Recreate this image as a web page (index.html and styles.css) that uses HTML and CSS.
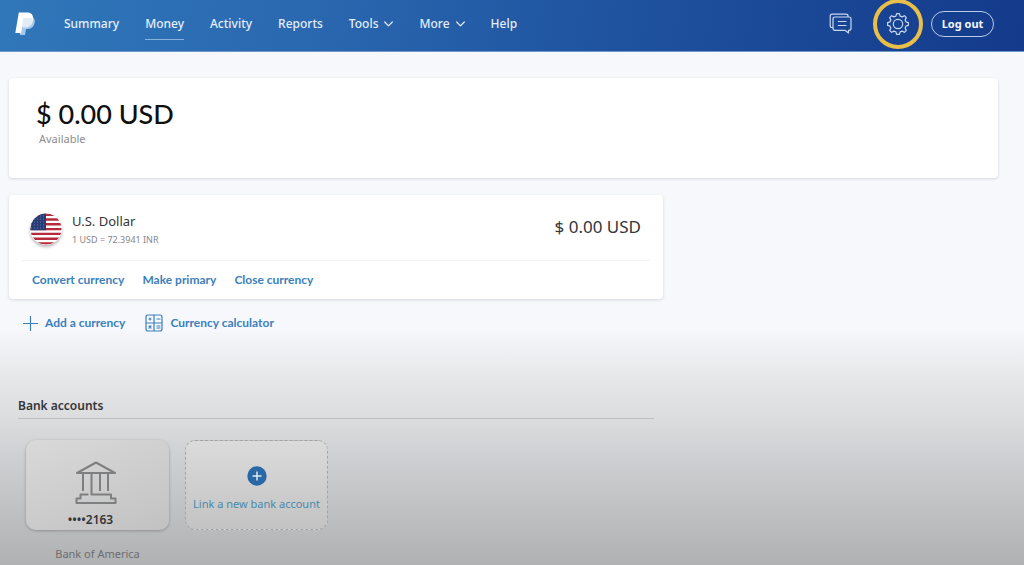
FILE: index.html
```html
<!DOCTYPE html>
<html lang="en">
<head>
<meta charset="utf-8">
<meta name="viewport" content="width=device-width, initial-scale=1">
<title>Money</title>
<link rel="stylesheet" href="styles.css">
</head>
<body class="page">
<header class="topbar">
  <a class="logo" href="#" aria-label="PayPal home">
    <svg width="20" height="24" viewBox="0 0 20 24">
      <path fill="#a9c9e8" d="M17.5 5C20 6.500 20.200 9 19.300 12C18.300 15.500 15.700 17 12.500 17H11L10 23H5L6 17Z"/>
      <path fill="#dbe8f5" d="M6 7H18C18 12.500 15 15.600 10 15.600H7L5.200 23H5Z"/>
      <path fill="#fff" d="M3.800.5H12C16.500.5 18.500 3 17.900 7C17.200 11.700 14.200 14 9.500 14H7.200L6 21H.3Z"/>
      <path fill="#e3edf8" d="M8.300 6H17.900C17.300 11.500 14.200 14 9.500 14H7.100Z"/>
    </svg>
  </a>
  <nav class="nav">
    <a class="nav-link" href="#">Summary</a>
    <a class="nav-link nav-current" href="#" aria-current="page">Money</a>
    <a class="nav-link" href="#">Activity</a>
    <a class="nav-link" href="#">Reports</a>
    <button class="nav-link" type="button">Tools <svg width="9" height="6" viewBox="0 0 9 6"><path class="line" d="M.7 1L4.500 4.800L8.300 1"/></svg></button>
    <button class="nav-link" type="button">More <svg width="9" height="6" viewBox="0 0 9 6"><path class="line" d="M.7 1L4.500 4.800L8.300 1"/></svg></button>
    <a class="nav-link" href="#">Help</a>
  </nav>
  <div class="tools">
    <button class="icon-button" type="button" aria-label="Messages">
      <svg width="24" height="22" viewBox="0 0 24 22"><path class="line" d="M4 14.500H3Q1.200 14.500 1.200 12.700V3Q1.200 1.200 3 1.200H17Q19 1.200 19 3V3.800M6 4H20Q22 4 22 6V15.300Q22 17.300 20 17.300H19.500V20L16 17.300H6Q4 17.300 4 15.300V6Q4 4 6 4ZM9.300 8.500H17M9.300 12.500H17"/></svg>
    </button>
    <button class="icon-button ringed" type="button" aria-label="Settings">
      <svg width="24" height="24" viewBox="-12 -12 24 24"><path class="line" d="M-1.400-10.400H1.400L2.100-7.900Q3.200-7.600 4.100-7.100L6.360-8.340L8.340-6.360L7.100-4.100Q7.600-3.200 7.900-2.100L10.400-1.400V1.400L7.900 2.100Q7.600 3.200 7.100 4.100L8.340 6.360L6.360 8.340L4.100 7.100Q3.200 7.600 2.100 7.900L1.400 10.400H-1.400L-2.100 7.900Q-3.200 7.600-4.100 7.100L-6.360 8.340L-8.340 6.360L-7.100 4.100Q-7.600 3.200-7.900 2.100L-10.400 1.400V-1.400L-7.900-2.100Q-7.600-3.200-7.100-4.100L-8.340-6.360L-6.360-8.340L-4.100-7.100Q-3.200-7.600-2.100-7.900Z"/><circle class="line" r="4.700"/></svg>
    </button>
    <button class="logout" type="button">Log out</button>
  </div>
</header>
<main class="content">
  <section class="card balance">
    <h1 class="balance-amount">$ 0.00 USD</h1>
    <p class="balance-label">Available</p>
  </section>
  <section class="card currency">
    <div class="currency-row">
      <svg class="flag" width="32" height="32" viewBox="0 0 32 32" aria-hidden="true">
        <defs><clipPath id="disc"><circle cx="16" cy="16" r="15.500"/></clipPath></defs>
        <g clip-path="url(#disc)">
          <path fill="#fff" d="M0 0H32V32H0Z"/>
          <path stroke="#b52b3c" stroke-width="2.400" d="M0 1.700H32M0 6.500H32M0 11.300H32M0 16.100H32M0 20.900H32M0 25.700H32M0 30.500H32"/>
          <path fill="#293c75" d="M0 0H16V17.300H0Z"/>
          <path stroke="#6577ab" stroke-width="1" stroke-dasharray="1 2" d="M1 3H16M1 6H16M1 9H16M1 12H16M1 15H16"/>
        </g>
      </svg>
      <div class="currency-info">
        <h2 class="currency-name">U.S. Dollar</h2>
        <p class="currency-rate">1 USD = 72.3941 INR</p>
      </div>
      <p class="currency-amount">$ 0.00 USD</p>
    </div>
    <div class="currency-actions">
      <a class="link" href="#">Convert currency</a>
      <a class="link" href="#">Make primary</a>
      <a class="link" href="#">Close currency</a>
    </div>
  </section>
  <div class="extras">
    <a class="link" href="#"><svg width="15" height="15" viewBox="0 0 15 15"><path class="line" d="M7.500 .5V14.500M.5 7.500H14.500"/></svg>Add a currency</a>
    <a class="link" href="#"><svg width="18" height="18" viewBox="0 0 18 18"><path class="line" d="M3 1H15Q17 1 17 3V15Q17 17 15 17H3Q1 17 1 15V3Q1 1 3 1ZM9 1V17M1 9H17M4 5H6M5 4V6M12 5H15M4 12L6 14M6 12L4 14M12 12H15M12 14H15"/></svg>Currency calculator</a>
  </div>
  <section class="banks">
    <h2 class="banks-title">Bank accounts</h2>
    <div class="tiles">
      <figure class="account">
        <a class="tile tile-bank" href="#">
          <svg class="bank-icon" width="42" height="43" viewBox="0 0 42 43"><path class="bank-line" d="M21 1.500L40 12H2ZM8 13V30M16.500 13V33.500H36V37.500H40.500V42H1.500V37.500H5.500V33.500H13.500M25 13V30M33 13V30"/></svg>
          <span class="digits">••••2163</span>
        </a>
        <figcaption class="caption">Bank of America</figcaption>
      </figure>
      <button class="tile tile-new" type="button">
        <svg width="20" height="20" viewBox="0 0 20 20"><circle cx="10" cy="10" r="9.700" fill="#2968a6"/><path stroke="#e2e8ee" stroke-width="1.500" d="M10 5.500V14.500M5.500 10H14.500"/></svg>
        <span>Link a new bank account</span>
      </button>
    </div>
  </section>
</main>
</body>
</html>
```

FILE: styles.css
```css
* { box-sizing: border-box; margin: 0; }

.page {
  min-height: 100vh;
  font-family: "Noto Sans", sans-serif;
  font-size: 12px;
  line-height: 16px;
  color: #333539;
  background: linear-gradient(#f6f8fc 58%, #e6e7e9 67%, #dadbdc 75%, #d0d1d5 80%, #c5c6c7 87%, #b0b1b3);
}

button { font: inherit; background: none; border: 0; padding: 0; cursor: pointer; }
a { color: inherit; text-decoration: none; }
.line { fill: none; stroke: currentColor; stroke-width: 1.2; stroke-linejoin: round; stroke-linecap: round; }

.topbar {
  display: flex;
  align-items: center;
  height: 52px;
  padding: 0 30px 3px 15px;
  color: #e4eefa;
  background: linear-gradient(100deg, #3077b9, #2a68b0 30%, #1f539f 60%, #143a8b);
  border-bottom: 1px solid #6f98cb;
}
.logo { display: flex; }
.nav { display: flex; gap: 26px; margin-left: 29px; }
.nav-link {
  display: flex;
  align-items: center;
  gap: 6px;
  height: 32px;
  border-bottom: 1px solid transparent;
  font-size: 12px;
  font-weight: 500;
  color: inherit;
}
.nav-current { border-bottom-color: #8bb2dd; }

.tools { display: flex; align-items: center; margin-left: auto; }
.icon-button { display: flex; align-items: center; justify-content: center; color: #c9d9f0; }
.ringed {
  width: 50px;
  height: 50px;
  margin: 0 8px 0 20px;
  border: 4px solid #e9bf4a;
  border-radius: 50%;
}
.logout {
  width: 63px;
  height: 26px;
  border: 1px solid #b9cbe8;
  border-radius: 13px;
  font-size: 11px;
  font-weight: 700;
  color: #f2f6fc;
}

.content { padding: 26px 26px 0 9px; }
.card { background: #fff; border-radius: 4px; box-shadow: 0 1px 3px #d3d6dc; }

.balance { padding: 20px 27px 30px; }
.balance-amount { font: 500 27px/32px Lato, sans-serif; color: #101010; }
.balance-label { padding-left: 3px; font-size: 11px; line-height: 18px; color: #8b8c8e; }

.currency { max-width: 654px; margin-top: 17px; padding: 15px 13px 0 12px; }
.currency-row { display: flex; align-items: center; padding: 0 9px 12px; border-bottom: 1px solid #f3f3f4; }
.flag { border-radius: 50%; box-shadow: 0 2px 3px #b8b8b8; }
.currency-info { margin-left: 10px; }
.currency-name { font-size: 13px; line-height: 22px; font-weight: 400; }
.currency-rate { font-size: 9px; line-height: 16px; color: #85868a; }
.currency-amount { margin: 0 0 5px auto; font-size: 17px; line-height: 20px; }
.currency-actions { display: flex; gap: 18px; padding: 11px; }
.link { display: flex; align-items: center; gap: 7px; font: 700 12px/16px Lato, sans-serif; color: #3b7fbc; }

.extras { display: flex; gap: 20px; padding: 15px 14px; }

.banks { max-width: 645px; padding: 51px 0 0 9px; }
.banks-title { padding-bottom: 4px; font-size: 12px; line-height: 16px; font-weight: 600; border-bottom: 1px solid #bdbec0; }
.tiles { display: flex; align-items: flex-start; gap: 16px; padding: 21px 8px 0; }
.tile {
  display: flex;
  flex-direction: column;
  align-items: center;
  width: 143px;
  height: 90px;
  border-radius: 10px;
  font-size: 11px;
}
.tile-bank { padding: 21px 4px 0 0; gap: 8px; background: linear-gradient(160deg, #d9d9d9, #c2c2c3); box-shadow: 0 1px 3px #8e8f92; }
.bank-line { fill: none; stroke: #7e7f80; stroke-width: 2; stroke-linejoin: round; }
.digits { padding-right: 10px; font-size: 12px; font-weight: 600; line-height: 16px; }
.tile-new { padding-top: 25px; gap: 10px; color: #4689ad; background: linear-gradient(#dbdbdb, #c3c3c4); border: 1px dashed #a2a3a5; }
.caption { margin-top: 16px; font-size: 11px; line-height: 16px; text-align: center; color: #6c6d70; }
```
